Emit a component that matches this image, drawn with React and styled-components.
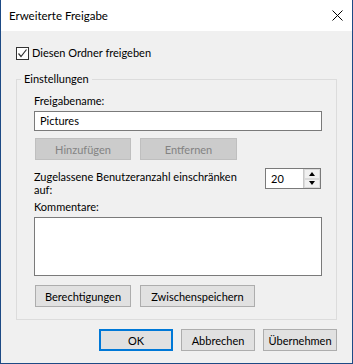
import React from "react";
import styled, { createGlobalStyle } from "styled-components";

const Global = createGlobalStyle`
  html, body {
    margin: 0;
    padding: 0;
    background: #f0f0f0;
  }
  * {
    box-sizing: border-box;
  }
  body {
    font-family: Lato, "Liberation Sans", sans-serif;
    font-size: 11px;
    color: #000;
  }
`;

function App() {
  return (
    <>
      <Global />
      <Window>
        <TitleBar>
          <Title>Erweiterte Freigabe</Title>
          <CloseIcon viewBox="0 0 11 11">
            <path d="M0.5 0.5 L10.5 10.5 M10.5 0.5 L0.5 10.5" stroke="#000" strokeWidth="1" />
          </CloseIcon>
        </TitleBar>
        <Body>
          <CheckRow>
            <CheckBox>
              <svg width="11" height="11" viewBox="0 0 11 11">
                <path d="M1.5 5.5 L4 8.5 L9.5 1.5" fill="none" stroke="#333" strokeWidth="1.2" />
              </svg>
            </CheckBox>
            <CheckLabel>Diesen Ordner freigeben</CheckLabel>
          </CheckRow>

          <Group>
            <Legend>Einstellungen</Legend>
            <Label>Freigabename:</Label>
            <TextBox>Pictures</TextBox>
            <ButtonRow $top={7}>
              <Button $w={96} disabled>Hinzufügen</Button>
              <Button $w={97} disabled>Entfernen</Button>
            </ButtonRow>
            <LimitRow>
              <LimitText>
                Zugelassene Benutzeranzahl einschränken
                <br />
                auf:
              </LimitText>
              <Spin>
                <SpinValue>20</SpinValue>
                <SpinButtons>
                  <SpinButton>
                    <Arrow $up />
                  </SpinButton>
                  <SpinButton>
                    <Arrow />
                  </SpinButton>
                </SpinButtons>
              </Spin>
            </LimitRow>
            <Label>Kommentare:</Label>
            <CommentBox />
            <ButtonRow $top={9}>
              <Button $w={96}>Berechtigungen</Button>
              <Button $w={115}>Zwischenspeichern</Button>
            </ButtonRow>
          </Group>

          <Footer>
            <Button $w={74} $default>OK</Button>
            <Button $w={74}>Abbrechen</Button>
            <Button $w={74}>Übernehmen</Button>
          </Footer>
        </Body>
      </Window>
    </>
  );
}

const Window = styled.div`
  width: 353px;
  height: 364px;
  display: flex;
  flex-direction: column;
  border-left: 1px solid #1d4a85;
  border-right: 1px solid #1d4a85;
  border-bottom: 1px solid #1d4a85;
  background: #f0f0f0;
`;

const TitleBar = styled.div`
  height: 31px;
  flex: none;
  background: #fff;
  display: flex;
  align-items: center;
  justify-content: space-between;
  padding: 0 9px 0 8px;
`;

const Title = styled.span`
  font-size: 11.5px;
  line-height: 16px;
`;

const CloseIcon = styled.svg`
  width: 11px;
  height: 11px;
`;

const Body = styled.div`
  flex: 1;
  display: flex;
  flex-direction: column;
  padding: 16px 15px 12px 15px;
`;

const CheckRow = styled.div`
  display: flex;
  align-items: center;
  height: 13px;
`;

const CheckBox = styled.span`
  width: 13px;
  height: 13px;
  border: 1px solid #333;
  background: #fff;
  display: flex;
  align-items: center;
  justify-content: center;
`;

const CheckLabel = styled.span`
  margin-left: 3px;
  line-height: 16px;
  margin-top: -2px;
`;

const Group = styled.div`
  position: relative;
  margin-top: 19px;
  border: 1px solid #dcdcdc;
  padding: 13px 14px 12px 17px;
  display: flex;
  flex-direction: column;
`;

const Legend = styled.span`
  position: absolute;
  top: -9px;
  left: 4px;
  padding: 0 3px;
  line-height: 16px;
  background: #f0f0f0;
`;

const Label = styled.div`
  line-height: 16px;
`;

const TextBox = styled.div`
  margin-top: 2px;
  height: 20px;
  border: 1px solid #7a7a7a;
  background: #fff;
  padding: 0 5px;
  line-height: 18px;
`;

const ButtonRow = styled.div`
  display: flex;
  gap: 9px;
  margin-top: ${(p) => p.$top}px;
  padding-left: 1px;
`;

const Button = styled.button`
  width: ${(p) => p.$w}px;
  height: 22px;
  padding: 0;
  font: inherit;
  color: #000;
  background: #e1e1e1;
  border: ${(p) => (p.$default ? "2px solid #0078d7" : "1px solid #adadad")};
  &:disabled {
    background: #cccccc;
    border-color: #bfbfbf;
    color: #838383;
  }
`;

const LimitRow = styled.div`
  display: flex;
  justify-content: space-between;
  margin-top: 8px;
  margin-bottom: 3px;
`;

const LimitText = styled.div`
  line-height: 13px;
  padding-top: 2px;
`;

const Spin = styled.div`
  width: 56px;
  height: 21px;
  margin-right: 1px;
  border: 1px solid #7a7a7a;
  background: #fff;
  display: flex;
`;

const SpinValue = styled.div`
  flex: 1;
  padding-left: 5px;
  line-height: 19px;
`;

const SpinButtons = styled.div`
  width: 17px;
  display: flex;
  flex-direction: column;
  border-left: 1px solid #c8c8c8;
`;

const SpinButton = styled.div`
  flex: 1;
  background: #f0f0f0;
  border: 1px solid #dadada;
  display: flex;
  align-items: center;
  justify-content: center;
`;

const Arrow = styled.span`
  width: 0;
  height: 0;
  border-left: 3.5px solid transparent;
  border-right: 3.5px solid transparent;
  ${(p) =>
    p.$up ? "border-bottom: 4px solid #000;" : "border-top: 4px solid #000;"}
`;

const CommentBox = styled.div`
  margin-top: 2px;
  height: 59px;
  border: 1px solid #7a7a7a;
  background: #fff;
`;

const Footer = styled.div`
  margin-top: auto;
  display: flex;
  justify-content: flex-end;
  gap: 8px;
`;

export default App;
